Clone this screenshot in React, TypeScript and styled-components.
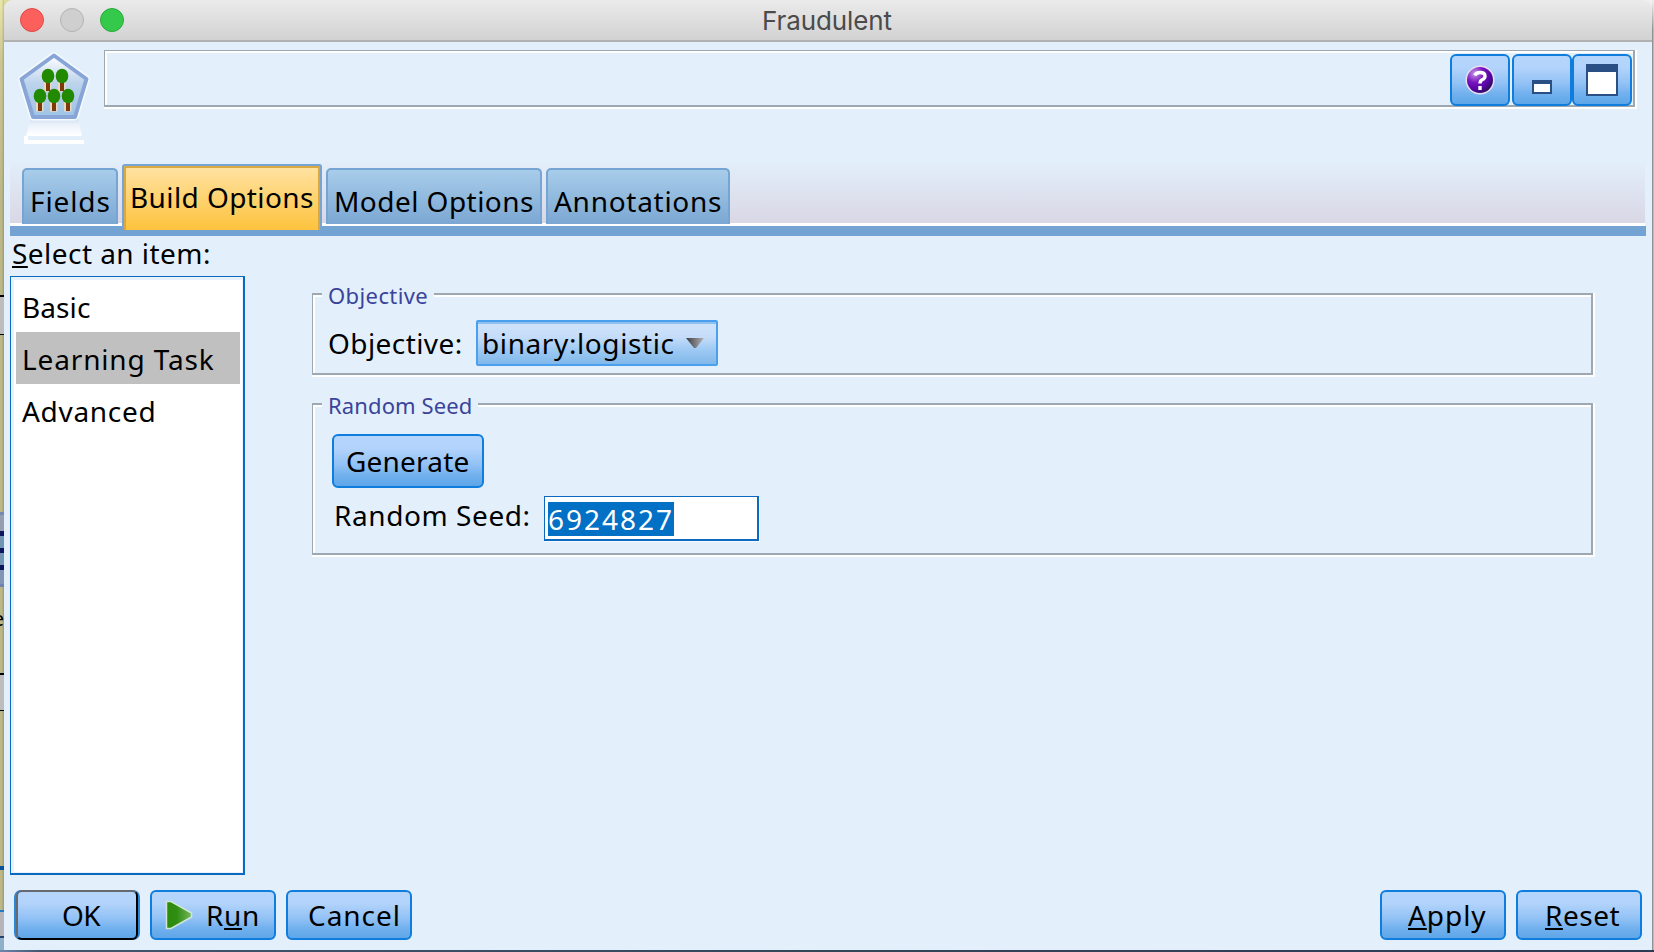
import React from "react";
import styled, { createGlobalStyle, css } from "styled-components";

const SURFACE = "#e3f0fc";
const ACCENT = "#0e7ddd";
const FRAME = "#9ea8b3";

const GlobalStyle = createGlobalStyle`
  html, body { margin: 0; padding: 0; overflow: hidden; }
  *, *::before, *::after { box-sizing: border-box; }
  body { font-family: "Noto Sans", sans-serif; font-size: 28px; color: #000; background: #34465c; }
  button { font: inherit; color: inherit; padding: 0; margin: 0; }
`;

const Screen = styled.div`
  display: grid;
  grid-template-columns: 4px 1fr 2px;
  grid-template-rows: 950px 2px;
  width: 1654px;
  height: 952px;
  overflow: hidden;
  background: linear-gradient(to right, #dedaa0 50%, #f0f0f0 50%);
`;

const LeftEdge = styled.div`
  display: flex;
  flex-direction: column;
  background:
    linear-gradient(to right, rgba(0, 0, 0, 0) 40%, rgba(0, 0, 0, 0.16)),
    linear-gradient(to bottom, #eae7aa 0, #cbc692 60px, #bcb787 200px);
  overflow: hidden;
`;

const Slice = styled.div<{ $h: number; $color?: string }>`
  flex: 0 0 ${(p) => p.$h}px;
  background: ${(p) => p.$color ?? "transparent"};
`;

const ClippedLabel = styled.div`
  flex: 0 0 26px;
  display: flex;
  justify-content: flex-end;
  font-size: 20px;
  line-height: 26px;
`;

const RightEdge = styled.div`
  background:
    linear-gradient(#f0f0f0, rgba(240, 240, 240, 0)) top / 100% 30px no-repeat,
    linear-gradient(to right, #8d9297 50%, #b9b9bb 50%);
`;

const BottomEdge = styled.div`
  grid-column: 1 / -1;
  background: linear-gradient(to right, #6d86ab 0, #41556f 40px, #34465a 50%, #2b3a55);
`;

const Window = styled.main`
  display: flex;
  flex-direction: column;
  min-width: 0;
  background: ${SURFACE};
  border-radius: 9px 9px 0 0;
  overflow: hidden;
`;

const TitleBar = styled.header`
  display: grid;
  grid-template-columns: 200px 1fr 200px;
  align-items: center;
  height: 42px;
  padding-bottom: 1px;
  border-bottom: 2px solid #b1b1b1;
  background: linear-gradient(#ebebeb, #d2d2d2);
`;

const Lights = styled.div`
  display: flex;
  gap: 16px;
  padding: 1px 0 0 16px;
`;

const Light = styled.span<{ $fill: string; $ring: string }>`
  width: 24px;
  height: 24px;
  border-radius: 50%;
  border: 1px solid ${(p) => p.$ring};
  background: ${(p) => p.$fill};
`;

const Title = styled.h1`
  margin: 0 0 0 -2px;
  padding-top: 2px;
  text-align: center;
  font: 400 26px/37px Inter, sans-serif;
  letter-spacing: -0.1px;
  color: #4b4b4b;
`;

const Header = styled.section`
  display: flex;
  height: 115px;
  padding: 8px 17px 0 0;
`;

const NodeIcon = styled.svg`
  flex: 0 0 100px;
  height: 115px;
  margin-top: -8px;
`;

const Description = styled.div`
  flex: 1;
  display: flex;
  justify-content: flex-end;
  height: 57px;
  padding: 3px 1px 0 0;
  border: solid ${FRAME};
  border-width: 1px 2px 2px 1px;
  box-shadow: 2px 0 #fff, 0 2px #fff, 2px 2px #fff, inset 2px 2px #fff;
`;

const raised = css`
  border: 2px solid ${ACCENT};
  border-radius: 6px;
  background: linear-gradient(#b5d5fb 0, #b2d3fb 25%, #91c1f5 58%, #72b1ee 78%, #5ea6e9 100%);
`;

const ToolButton = styled.button<{ $spaced?: boolean }>`
  ${raised}
  display: grid;
  place-items: center;
  width: 60px;
  height: 52px;
  margin-right: ${(p) => (p.$spaced ? 2 : 0)}px;
`;

const TabStrip = styled.nav`
  display: flex;
  align-items: flex-start;
  gap: 4px;
  height: 69px;
  margin: 0 7px 0 6px;
  padding: 7px 0 0 12px;
  background:
    linear-gradient(#fff, #fff) bottom / 100% 3px no-repeat,
    linear-gradient(${SURFACE}, #d9d6e4);
`;

const Tab = styled.button<{ $w: number; $active?: boolean; $track: number }>`
  width: ${(p) => p.$w}px;
  height: 56px;
  margin-top: 4px;
  padding-left: 6px;
  border: 2px solid #76a5d3;
  border-bottom: 0;
  border-radius: 5px 5px 0 0;
  background: linear-gradient(#a8cdea, #7ba7d3);
  text-align: left;
  white-space: nowrap;
  line-height: 62px;
  letter-spacing: ${(p) => p.$track}px;
  overflow: hidden;
  ${(p) =>
    p.$active &&
    css`
      position: relative;
      height: 66px;
      margin-top: 0;
      border-radius: 3px 3px 0 0;
      background: linear-gradient(#ffe3a4, #fdc33d);
      box-shadow: inset 2px 2px #daa840, inset -2px 0 #daa840;
      line-height: 60px;
      padding-bottom: 2px;
    `}
`;

const TabBar = styled.div`
  height: 10px;
  margin: 0 6px;
  background: #73a3d3;
`;

const Body = styled.div`
  display: flex;
  height: 639px;
  padding-left: 6px;
`;

const Sidebar = styled.aside`
  width: 235px;
`;

const Text = styled.span<{ $track?: number; $line?: number }>`
  display: block;
  white-space: nowrap;
  line-height: ${(p) => p.$line ?? 46}px;
  letter-spacing: ${(p) => p.$track ?? 0}px;
`;

const SidebarTitle = styled(Text)`
  padding-left: 2px;
`;

const Mnemonic = styled.span`
  text-decoration: underline;
  text-decoration-thickness: 2px;
  text-underline-offset: 2px;
  text-decoration-skip-ink: none;
`;

const ItemList = styled.ul`
  height: 599px;
  margin: 6px 0 0;
  padding: 3px 3px 0 5px;
  list-style: none;
  border: solid #0b69c0;
  border-width: 1px 2px 2px 1px;
  background: #fff;
  box-shadow: inset 3px 3px #e9f1fa, inset -1px -1px #e9f1fa;
`;

const Item = styled.li<{ $track: number; $selected?: boolean }>`
  height: 52px;
  padding-left: 6px;
  line-height: 54px;
  white-space: nowrap;
  letter-spacing: ${(p) => p.$track}px;
  background: ${(p) => (p.$selected ? "#c0c0c0" : "transparent")};
`;

const Content = styled.section`
  display: flex;
  flex-direction: column;
  gap: 28px;
  width: 1281px;
  margin-left: 67px;
  padding-top: 57px;
`;

const Group = styled.section<{ $h: number }>`
  height: ${(p) => p.$h}px;
  border: 2px solid ${FRAME};
  border-left-width: 1px;
  box-shadow: 2px 0 #fff, 0 2px #fff, 2px 2px #fff, inset 2px 2px #fff;
`;

const Legend = styled.h2<{ $w: number; $track: number }>`
  width: ${(p) => p.$w}px;
  margin: -11px 0 0 9px;
  padding-left: 6px;
  background: ${SURFACE};
  color: #3b449b;
  font-size: 22px;
  font-weight: 400;
  line-height: 22px;
  letter-spacing: ${(p) => p.$track}px;
  white-space: nowrap;
`;

const ObjectiveRow = styled.div`
  display: flex;
  gap: 13px;
  padding: 14px 0 0 15px;
`;

const ObjectiveLabel = styled(Text)`
  width: 135px;
`;

const Combo = styled.button`
  display: flex;
  align-items: center;
  gap: 11px;
  width: 242px;
  height: 46px;
  padding-left: 4px;
  border: 2px solid #4a9fee;
  border-radius: 2px;
  background: linear-gradient(#8dc0ef 0, #8dc0ef 2px, #cfe2fa 2px, #c5ddf9 35%, #9fcaf3 65%, #81b8ea 100%);
`;

const GenerateButton = styled.button`
  ${raised}
  display: block;
  width: 152px;
  height: 54px;
  margin: 18px 0 8px 19px;
  padding-left: 12px;
  text-align: left;
`;

const SeedRow = styled.div`
  display: flex;
  align-items: flex-start;
  padding-left: 21px;
`;

const SeedLabel = styled(Text)`
  width: 210px;
`;

const SeedInput = styled.div`
  width: 215px;
  height: 45px;
  padding: 5px 0 0 3px;
  border: solid #0b69c0;
  border-width: 1px 2px 2px 1px;
  background: #fff;
  box-shadow: 1px 1px #f6fafe;
`;

const SelectedValue = styled(Text)`
  width: 126px;
  background: #0270c4;
  color: #fff;
`;

const Footer = styled.footer`
  display: flex;
  gap: 10px;
  height: 75px;
  padding: 15px 10px 0;
`;

const ActionButton = styled.button<{ $pad: number; $track?: number; $pushed?: boolean }>`
  ${raised}
  display: flex;
  align-items: center;
  width: 126px;
  height: 50px;
  padding-left: ${(p) => p.$pad}px;
  line-height: 46px;
  white-space: nowrap;
  letter-spacing: ${(p) => p.$track ?? 0}px;
  margin-left: ${(p) => (p.$pushed ? "auto" : "0")};
`;

const DefaultFrame = styled.div`
  width: 126px;
  height: 50px;
  padding: 0 2px;
  border-radius: 7px;
  background: #2a86d8;
`;

const DefaultButton = styled(ActionButton)`
  width: 122px;
  border-color: #666a70 #000 #000 #666a70;
`;

const RunArrow = styled.svg`
  margin-right: 13px;
`;

const trees: [number, number][] = [
  [48, 76],
  [62, 76],
  [40, 96],
  [54, 96],
  [68, 96],
];

function ForestIcon() {
  return (
    <NodeIcon viewBox="4 42 100 115" width="100" height="115">
      <defs>
        <linearGradient id="pane" x1="0" y1="0" x2="0" y2="1">
          <stop offset="0" stopColor="#ffffff" />
          <stop offset="0.22" stopColor="#dfe9f6" />
          <stop offset="0.45" stopColor="#bcd3ec" />
          <stop offset="1" stopColor="#9dc3e5" />
        </linearGradient>
        <linearGradient id="mirror" x1="0" y1="0" x2="0" y2="1">
          <stop offset="0" stopColor="#cfddf0" />
          <stop offset="0.4" stopColor="#edf3fb" />
          <stop offset="1" stopColor="#ffffff" />
        </linearGradient>
      </defs>
      <path d="M31 118H78L82 136H26Z" fill="url(#mirror)" />
      <path d="M24 136H28V140H84V144H24Z" fill="#fff" />
      <path d="M54 55.500L86.500 79L75 117H33L21.500 79Z" fill="none" stroke="#f6faff" strokeWidth="7" strokeLinejoin="round" />
      <path d="M54 55.500L86.500 79L75 117H33L21.500 79Z" fill="url(#pane)" stroke="#87a5d6" strokeWidth="4" strokeLinejoin="round" />
      {trees.map(([x, y]) => (
        <g key={`${x}-${y}`}>
          <rect x={x - 4} y={y + 4} width="7.500" height="11.500" fill="#e6d9c8" />
          <rect x={x - 2} y={y + 4} width="4" height="11" fill="#7d3a08" />
          <ellipse cx={x} cy={y} rx="6.300" ry="7.300" fill="#218a00" />
        </g>
      ))}
    </NodeIcon>
  );
}

function HelpIcon() {
  return (
    <svg width="30" height="30" viewBox="0 0 30 30">
      <defs>
        <radialGradient id="orb" cx="0.3" cy="0.25" r="0.85">
          <stop offset="0" stopColor="#c79ae6" />
          <stop offset="0.4" stopColor="#7a16be" />
          <stop offset="0.7" stopColor="#5804a4" />
          <stop offset="1" stopColor="#24104f" />
        </radialGradient>
      </defs>
      <circle cx="15" cy="15" r="14.500" fill="#eadff2" />
      <circle cx="15" cy="15" r="13" fill="url(#orb)" />
      <path d="M10 10.500Q11 7.500 15 7.500Q20 7.500 20 11Q20 13.500 17.500 14.500Q15 15.500 15 18.500M15 21V25" fill="none" stroke="#fff" strokeWidth="3.400" />
    </svg>
  );
}

function MinimizeIcon() {
  return (
    <svg width="20" height="38" viewBox="0 0 20 38">
      <rect x="0" y="19" width="20" height="14" fill="#2a4f84" />
      <rect x="2" y="23" width="16" height="8" fill="#fff" />
    </svg>
  );
}

function MaximizeIcon() {
  return (
    <svg width="32" height="32" viewBox="0 0 32 32">
      <rect width="32" height="32" fill="#2a4f84" />
      <rect x="2" y="8" width="28" height="22" fill="#fff" />
    </svg>
  );
}

export default function App() {
  return (
    <>
      <GlobalStyle />
      <Screen>
        <LeftEdge>
          <Slice $h={295} />
          <Slice $h={2} $color="#000" />
          <Slice $h={37} $color="#bdbdbd" />
          <Slice $h={1} $color="#000" />
          <Slice $h={177} />
          <Slice $h={3} $color="#7488b4" />
          <Slice $h={16} $color="#949eb0" />
          <Slice $h={5} $color="#0b1560" />
          <Slice $h={12} $color="#7095b5" />
          <Slice $h={5} $color="#0b1560" />
          <Slice $h={12} $color="#7095b5" />
          <Slice $h={5} $color="#0b1560" />
          <Slice $h={14} $color="#8095b4" />
          <Slice $h={3} $color="#7083b5" />
          <Slice $h={19} />
          <ClippedLabel>e</ClippedLabel>
          <Slice $h={41} />
          <Slice $h={2} $color="#000" />
          <Slice $h={35} $color="#bdbdbd" />
          <Slice $h={1} $color="#000" />
          <Slice $h={155} />
          <Slice $h={4} $color="#06509c" />
          <Slice $h={40} />
          <Slice $h={2} $color="#1c7bcb" />
          <Slice $h={24} $color="#b5b5b7" />
          <Slice $h={2} $color="#24436a" />
          <Slice $h={12} $color="#8fb0c9" />
        </LeftEdge>
        <Window>
          <TitleBar>
            <Lights>
              <Light $fill="#fc605c" $ring="#dd4a48" />
              <Light $fill="#cfcfcf" $ring="#b2b2b2" />
              <Light $fill="#34c94a" $ring="#2aa93b" />
            </Lights>
            <Title>Fraudulent</Title>
          </TitleBar>
          <Header>
            <ForestIcon />
            <Description>
              <ToolButton $spaced aria-label="Help">
                <HelpIcon />
              </ToolButton>
              <ToolButton aria-label="Minimize">
                <MinimizeIcon />
              </ToolButton>
              <ToolButton aria-label="Maximize">
                <MaximizeIcon />
              </ToolButton>
            </Description>
          </Header>
          <TabStrip>
            <Tab $w={96} $track={0.9}>Fields</Tab>
            <Tab $w={200} $track={0.41} $active>Build Options</Tab>
            <Tab $w={216} $track={0.46}>Model Options</Tab>
            <Tab $w={184} $track={0.72}>Annotations</Tab>
          </TabStrip>
          <TabBar />
          <Body>
            <Sidebar>
              <SidebarTitle $line={34} $track={0.45}>
                <Mnemonic>S</Mnemonic>elect an item:
              </SidebarTitle>
              <ItemList>
                <Item $track={0.1}>Basic</Item>
                <Item $track={0.85} $selected>Learning Task</Item>
                <Item $track={0.7}>Advanced</Item>
              </ItemList>
            </Sidebar>
            <Content>
              <Group $h={82}>
                <Legend $w={112} $track={0.4}>Objective</Legend>
                <ObjectiveRow>
                  <ObjectiveLabel $track={0.42}>Objective:</ObjectiveLabel>
                  <Combo>
                    <Text $track={0.6} $line={42}>binary:logistic</Text>
                    <svg width="18" height="10" viewBox="0 0 18 10">
                      <defs>
                        <linearGradient id="arrow">
                          <stop offset="0" stopColor="#3c3c40" />
                          <stop offset="1" stopColor="#b4b4b8" />
                        </linearGradient>
                      </defs>
                      <path d="M0 0H18L10 10H8Z" fill="url(#arrow)" />
                    </svg>
                  </Combo>
                </ObjectiveRow>
              </Group>
              <Group $h={152}>
                <Legend $w={156} $track={0.12}>Random Seed</Legend>
                <GenerateButton>
                  <Text $track={0.2} $line={50}>Generate</Text>
                </GenerateButton>
                <SeedRow>
                  <SeedLabel $track={0.58} $line={38}>Random Seed:</SeedLabel>
                  <SeedInput>
                    <SelectedValue $track={1.98} $line={34}>6924827</SelectedValue>
                  </SeedInput>
                </SeedRow>
              </Group>
            </Content>
          </Body>
          <Footer>
            <DefaultFrame>
              <DefaultButton $pad={44} $track={-0.5}>OK</DefaultButton>
            </DefaultFrame>
            <ActionButton $pad={13} $track={0.64}>
              <RunArrow width="28" height="30" viewBox="0 0 28 30">
                <defs>
                  <linearGradient id="go">
                    <stop offset="0" stopColor="#2c8c0c" />
                    <stop offset="0.4" stopColor="#2f8d12" />
                    <stop offset="1" stopColor="#74b65c" />
                  </linearGradient>
                </defs>
                <path d="M1.500 1.500H6L26.500 13V17L6 28.500H1.500Z" fill="url(#go)" stroke="#cfe6d5" strokeWidth="1.500" />
              </RunArrow>
              <span>
                R<Mnemonic>u</Mnemonic>n
              </span>
            </ActionButton>
            <ActionButton $pad={20} $track={0.95}>Cancel</ActionButton>
            <ActionButton $pad={26} $track={0.95} $pushed>
              <span>
                <Mnemonic>A</Mnemonic>pply
              </span>
            </ActionButton>
            <ActionButton $pad={27} $track={0.5}>
              <span>
                <Mnemonic>R</Mnemonic>eset
              </span>
            </ActionButton>
          </Footer>
        </Window>
        <RightEdge />
        <BottomEdge />
      </Screen>
    </>
  );
}
